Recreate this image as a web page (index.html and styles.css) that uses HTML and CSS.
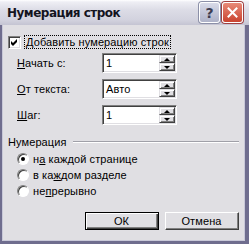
FILE: index.html
```html
<!DOCTYPE html>
<html>
<head>
    <title>Нумерация строк</title>
    <link rel="stylesheet" href="styles.css">
</head>
<body>
    <div class="window">
        <div class="titlebar">
            <span class="title">Нумерация строк</span>
            <div class="caption-buttons">
                <span class="cap-btn help">?</span>
                <span class="cap-btn close">
                    <svg width="11" height="11" viewBox="0 0 11 11">
                        <path d="M1.5 1.5 L9.5 9.5 M9.5 1.5 L1.5 9.5" stroke="#fff" stroke-width="2" stroke-linecap="square"/>
                    </svg>
                </span>
            </div>
        </div>

        <div class="client">
            <label class="check-row">
                <span class="checkbox">
                    <svg width="9" height="9" viewBox="0 0 9 9">
                        <path d="M1 3 L3 5 L7 1 L7 4 L3 8 L1 6 Z" fill="#000"/>
                    </svg>
                </span>
                <span class="focus"><u>Д</u>обавить нумерацию строк</span>
            </label>

            <div class="fields">
                <div class="field">
                    <span class="field-label"><u>Н</u>ачать с:</span>
                    <div class="spin">
                        <span class="spin-value">1</span>
                        <div class="spin-buttons">
                            <span class="spin-btn"><span class="arrow-up"></span></span>
                            <span class="spin-btn"><span class="arrow-down"></span></span>
                        </div>
                    </div>
                </div>
                <div class="field">
                    <span class="field-label"><u>О</u>т текста:</span>
                    <div class="spin">
                        <span class="spin-value">Авто</span>
                        <div class="spin-buttons">
                            <span class="spin-btn"><span class="arrow-up"></span></span>
                            <span class="spin-btn"><span class="arrow-down"></span></span>
                        </div>
                    </div>
                </div>
                <div class="field">
                    <span class="field-label"><u>Ш</u>аг:</span>
                    <div class="spin">
                        <span class="spin-value">1</span>
                        <div class="spin-buttons">
                            <span class="spin-btn"><span class="arrow-up"></span></span>
                            <span class="spin-btn"><span class="arrow-down"></span></span>
                        </div>
                    </div>
                </div>
            </div>

            <div class="group-title">
                <span>Нумерация</span>
                <span class="rule"></span>
            </div>

            <div class="radios">
                <label class="radio-row"><span class="radio checked"></span><span>н<u>а</u> каждой странице</span></label>
                <label class="radio-row"><span class="radio"></span><span>в ка<u>ж</u>дом разделе</span></label>
                <label class="radio-row"><span class="radio"></span><span>не<u>п</u>рерывно</span></label>
            </div>

            <div class="actions">
                <span class="btn default"><span class="btn-face">ОК</span></span>
                <span class="btn"><span class="btn-face">Отмена</span></span>
            </div>
        </div>
    </div>
</body>
</html>
```

FILE: styles.css
```css
body {
    margin: 0;
    padding: 0;
    font-family: "Liberation Sans", Arial, sans-serif;
    font-size: 11px;
    letter-spacing: 0.1px;
    color: #000;
    background-color: #e0dfe3;
}

.window {
    width: 249px;
    height: 244px;
    display: flex;
    flex-direction: column;
    background-color: #e0dfe3;
}

/* title bar (XP silver) */
.titlebar {
    height: 25px;
    flex: none;
    display: flex;
    align-items: center;
    justify-content: space-between;
    padding: 0 6px 0 7px;
    background: linear-gradient(#ffffff 0, #eeeef4 2px, #dcdce6 40%, #d2d2de 80%, #c4c4d2 100%);
}

.title {
    font-family: "DejaVu Sans", sans-serif;
    font-weight: bold;
    font-size: 12px;
    color: #14141e;
    letter-spacing: -0.5px;
}

.caption-buttons {
    display: flex;
    gap: 2px;
}

.cap-btn {
    width: 19px;
    height: 19px;
    border: 1px solid #fff;
    border-radius: 3px;
    display: flex;
    align-items: center;
    justify-content: center;
    box-sizing: content-box;
}

.help {
    background: linear-gradient(#d8dae8, #aeb2c8);
    color: #3c3c50;
    font-family: "DejaVu Sans", sans-serif;
    font-weight: bold;
    font-size: 14px;
    box-shadow: 0 0 0 1px #8c90a8;
}

.close {
    background: linear-gradient(#e88a78, #c9432f);
    box-shadow: 0 0 0 1px #a04040;
}

/* client area with frame */
.client {
    flex: 1;
    display: flex;
    flex-direction: column;
    border-style: solid;
    border-color: #6f6d8e;
    border-width: 0 4px 3px 2px;
    box-shadow: inset 1px 0 #c8c8d8, inset -1px -1px #c8c8d8;
    padding: 10px 6px 0 6px;
}

.check-row {
    display: flex;
    align-items: center;
    gap: 3px;
    height: 14px;
}

.checkbox {
    width: 11px;
    height: 11px;
    background: #fff;
    border: 1px solid;
    border-color: #808080 #fff #fff #808080;
    box-shadow: inset 1px 1px #404040, inset -1px -1px #e0dfe3;
    display: flex;
    align-items: center;
    justify-content: center;
}

.focus {
    border: 1px dotted #000;
    padding: 0 1px;
    line-height: 12px;
}

.fields {
    display: flex;
    flex-direction: column;
    gap: 6px;
    margin-top: 4px;
}

.field {
    display: flex;
    align-items: center;
    height: 20px;
}

.field-label {
    width: 85px;
    padding-left: 9px;
}

.spin {
    width: 71px;
    height: 16px;
    display: flex;
    align-items: center;
    justify-content: space-between;
    background: #fff;
    border: 1px solid;
    border-color: #808080 #fff #fff #808080;
    box-shadow: inset 1px 1px #404040, inset -1px -1px #e0dfe3;
    padding: 1px;
}

.spin-value {
    padding-left: 2px;
}

.spin-buttons {
    display: flex;
    flex-direction: column;
    width: 16px;
    height: 16px;
}

.spin-btn {
    flex: 1;
    display: flex;
    align-items: center;
    justify-content: center;
    background: #e0dfe3;
    border: 1px solid;
    border-color: #e0dfe3 #404040 #404040 #e0dfe3;
    box-shadow: inset 1px 1px #fff, inset -1px -1px #808080;
}

.arrow-up {
    width: 0;
    height: 0;
    border-left: 3px solid transparent;
    border-right: 3px solid transparent;
    border-bottom: 3px solid #000;
}

.arrow-down {
    width: 0;
    height: 0;
    border-left: 3px solid transparent;
    border-right: 3px solid transparent;
    border-top: 3px solid #000;
}

.group-title {
    display: flex;
    align-items: center;
    gap: 6px;
    margin-top: 11px;
    height: 12px;
}

.rule {
    flex: 1;
    height: 1px;
    background: #a0a0a8;
    border-bottom: 1px solid #fff;
}

.radios {
    display: flex;
    flex-direction: column;
    margin-top: 3px;
}

.radio-row {
    display: flex;
    align-items: center;
    gap: 4px;
    height: 16px;
    padding-left: 9px;
}

.radio {
    width: 10px;
    height: 10px;
    border-radius: 50%;
    background: #fff;
    border: 1px solid;
    border-color: #808080 #fff #fff #808080;
    box-shadow: inset 1px 1px #404040;
    display: flex;
    align-items: center;
    justify-content: center;
}

.radio.checked::after {
    content: "";
    width: 4px;
    height: 4px;
    border-radius: 50%;
    background: #000;
}

.actions {
    display: flex;
    justify-content: flex-end;
    gap: 6px;
    margin-top: auto;
    margin-bottom: 11px;
}

.btn {
    width: 74px;
    height: 18px;
    display: flex;
    box-sizing: border-box;
    border: 1px solid;
    border-color: #fff #404040 #404040 #fff;
}

.btn-face {
    flex: 1;
    display: flex;
    align-items: center;
    justify-content: center;
    border-right: 1px solid #808080;
    border-bottom: 1px solid #808080;
}

.btn.default {
    border: 1px solid #000;
    box-shadow: inset 1px 1px #fff, inset -1px -1px #404040;
}

.btn.default .btn-face {
    margin: 1px;
}
```
